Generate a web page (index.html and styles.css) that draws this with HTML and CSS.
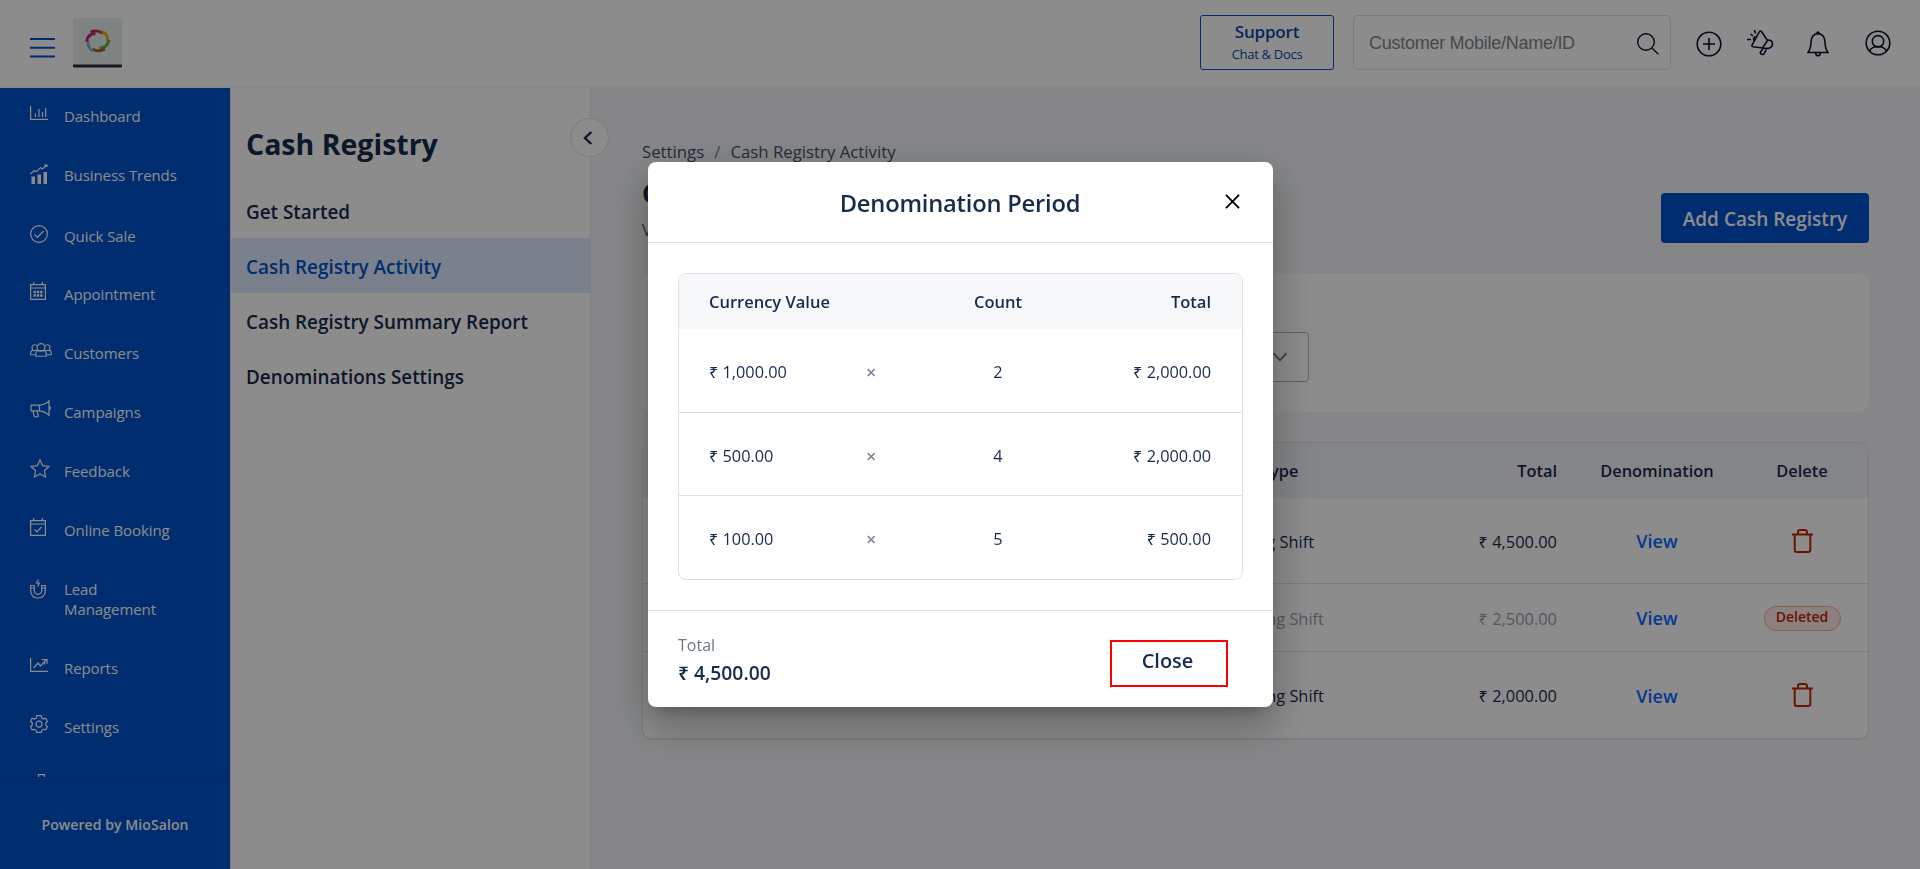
FILE: index.html
```html
<!DOCTYPE html>
<html lang="en">
<head>
<meta charset="utf-8">
<title>Cash Registry Activity</title>
<link rel="stylesheet" href="styles.css">
</head>
<body>
<div class="app">
  <header class="topbar">
    <svg class="burger" viewBox="0 0 25 20"><path d="M0 1h25M0 9.800h25M0 18.500h25"/></svg>
    <svg class="logo" viewBox="0 0 49 50"><rect class="logo-bg" width="49" height="48" rx="2"/><path class="logo-base" d="M0 46.500h49v2q0 1-2 1H2q-2 0-2-1z"/>
      <g fill="none" stroke-width="2.800"><path stroke="#d9232e" d="M17.500 14q6.500-3 12.500 1.500"/><path stroke="#f0a828" d="M29 13.500q6.500 2.500 5.500 10"/><path stroke="#59ad45" d="M36 22q-1 7-9.500 8.500"/><path stroke="#a9671c" d="M32 31q-6.500 3.500-12.500 0"/><path stroke="#6fb6cc" d="M20 33q-6-3-5-11"/><path stroke="#c4246f" d="M13.500 23.500q1-7.500 9-8"/></g></svg>
    <div class="support"><b>Support</b><span>Chat &amp; Docs</span></div>
    <div class="search"><span>Customer Mobile/Name/ID</span><svg viewBox="0 0 22 22"><circle cx="9" cy="9" r="8.300"/><path d="M15 15l6.300 6.300"/></svg></div>
    <svg class="ti t-plus" viewBox="0 0 26 26"><circle cx="13" cy="13" r="11.800"/><path d="M13 7v12M7 13h12"/></svg>
    <svg class="ti t-horn" viewBox="0 0 28 28"><path d="M13 4.500q1.300-2.800 2.800-.5l5.700 8.500-5 7.500-9.500-1.200q-1.800-.5-.8-2zM21.500 12q4.500-.3 5 3.500 0 4-4.500 5l-5.500-.5M17 20.500l-2.800 4q.8 2.600 3.500 1.800l3-5.800M9.500 8.500q-3 1.500-1.200 4.500M4.500 6l2.500 2M8.500 2l1 3.500M1 11.500h4"/></svg>
    <svg class="ti t-bell" viewBox="0 0 22 26"><path d="M11 2.500q-6.500.5-7 8.500-.2 7-3 10.500h20q-2.800-3.500-3-10.500-.5-8-7-8.500zM8.500 22q.5 2.800 2.500 2.800t2.500-2.800"/><circle cx="11" cy="2" r="1"/></svg>
    <svg class="ti t-user" viewBox="0 0 26 26"><circle cx="13" cy="13" r="11.800"/><circle cx="13" cy="11.300" r="5.700"/><path d="M4.500 21q2.500-4.500 8.500-4.500t8.500 4.500"/></svg>
  </header>
  <div class="body">
    <nav class="side">
      <ul class="menu">
        <li><svg viewBox="0 0 18 18"><path d="M.6 2v13.400H18M5.500 13V9.500M9 13V5M12.500 13V8M15.700 13V4"/></svg><span>Dashboard</span></li>
        <li><svg class="trend" viewBox="0 0 18 20"><path d="M.5 10l4-3.500 2 1.200 4-4 2 1L17 1M14 1h3v2"/><path class="solid" d="M1.500 12.500h3.500V20H1.500zM7.500 10.500H11V20H7.500zM13.500 8H17v12h-3.500z"/></svg><span>Business Trends</span></li>
        <li class="quick"><svg viewBox="0 0 18 18"><circle cx="9" cy="9" r="8.400"/><path d="M4.500 9.500l3 3 6-6.500"/></svg><span>Quick Sale</span></li>
        <li class="appt"><svg class="cal" viewBox="0 0 16 18"><path d="M.6 2.600h14.800v14.800H.6zM.6 6h14.800M3.700 0v3M12.300 0v3"/><path d="M3.500 10h9M3.500 13.500h9" stroke-width="2.400" stroke-dasharray="2.400 .9"/></svg><span>Appointment</span></li>
        <li><svg class="wide" viewBox="0 0 23 15"><circle cx="11.500" cy="4.800" r="4"/><path d="M6 14q-.5-5.500 3-5.800h5q3.500.3 3 5.800zM7.500 7.500Q5 8.500 2.500 7.800M6 12.500H.8Q.3 8.300 2.800 7.800.8 2.500 4.500 2q1.700-.2 2.800 1.300M15.500 7.500q2.500 1 5 .3M17 12.500h5.200q.5-4.200-2-4.700 2-5.300-1.700-5.800-1.700-.2-2.800 1.300"/></svg><span>Customers</span></li>
        <li><svg class="wide" viewBox="0 0 21 18"><path d="M.6 5.200H9Q15 4.500 18.500.8v14.500Q15 11.500 9 10.800H.6zM9 5.200v5.600M19.800 6.500v3M2.500 10.800l1 5q1.500 2 4.500.5l-1.500-5.500"/></svg><span>Campaigns</span></li>
        <li><svg class="star" viewBox="0 0 20 19"><path d="M10 1l2.700 5.700 6.200.8-4.500 4.300 1.100 6.200-5.500-3-5.500 3 1.100-6.200L1.100 7.500l6.200-.8z"/></svg><span>Feedback</span></li>
        <li><svg class="cal" viewBox="0 0 16 18"><path d="M.6 2.600h14.800v14.800H.6zM.6 6h14.800M3.700 0v3M12.300 0v3M4.500 11.500l2.500 2.500 4.500-5"/></svg><span>Online Booking</span></li>
        <li class="two"><svg class="magnet" viewBox="0 0 16 20"><path d="M.7 6.500h3.600V12q.5 3.300 3.700 3.300t3.700-3.300V6.500h3.600V12q-.6 7-7.300 7T.7 12zM.7 9h3.600M11.700 9h3.600M8.500.5L6.500 4h3L7.500 7.500"/></svg><span>Lead Management</span></li>
        <li><svg viewBox="0 0 18 18"><path d="M.6 2v13.400H18M3.500 12l4.500-5 2.500 3 5.500-6M11.500 3.500H17V8M14.500 4.500v4"/></svg><span>Reports</span></li>
        <li><svg viewBox="0 0 18 18"><path d="M6.800.7h4.400l.6 2.300 1.800 1 2.200-.7 1.600 3.200-1.700 1.600v2l1.700 1.600-1.600 3.200-2.200-.6-1.800 1-.6 2H6.800l-.6-2-1.800-1-2.200.6L.6 11.700l1.700-1.600v-2L.6 6.500l1.600-3.200 2.200.7 1.800-1z"/><circle cx="9" cy="9.200" r="3"/></svg><span>Settings</span></li>
        <li class="clipped"><svg class="last" viewBox="0 0 23 18"><path d="M8.500 5V.7h6V5M.7 5h21.600v12H.7z"/></svg></li>
      </ul>
      <div class="powered"><span>Powered by MioSalon</span></div>
    </nav>
    <aside class="panel">
      <h2><span>Cash Registry</span></h2>
      <a><span>Get Started</span></a>
      <a class="on"><span>Cash Registry Activity</span></a>
      <a><span>Cash Registry Summary Report</span></a>
      <a><span>Denominations Settings</span></a>
      <div class="collapse"><svg viewBox="0 0 10 14"><path d="M8.300 1L2 7l6.300 6"/></svg></div>
    </aside>
    <main class="main">
      <div class="crumbs"><span>Settings</span><i>/</i><span>Cash Registry Activity</span></div>
      <div class="head">
        <div><h1>Cash Registry Activity</h1><p>View cash registry activity</p></div>
        <button class="add"><span>Add Cash Registry</span></button>
      </div>
      <div class="filter"><div class="select"><svg viewBox="0 0 16 10"><path d="M1.500 1.200L8 8.200l6.500-7"/></svg></div></div>
      <div class="grid">
        <div class="tr th"><span>Shift Type</span><span class="r">Total</span><span class="c">Denomination</span><span class="c">Delete</span></div>
        <div class="tr"><span>Closing Shift</span><span class="r">₹ 4,500.00</span><span class="c view">View</span><span class="c"><svg class="bin" viewBox="0 0 21 24"><path d="M0 5.500h21M2.700 5.500V21q0 2 2 2h11.600q2 0 2-2V5.500M6 5V3.200Q6 1 8 1h5q2 0 2 2.200V5"/></svg></span></div>
        <div class="tr gone"><span>Opening Shift</span><span class="r">₹ 2,500.00</span><span class="c view">View</span><span class="c"><em>Deleted</em></span></div>
        <div class="tr"><span>Opening Shift</span><span class="r">₹ 2,000.00</span><span class="c view">View</span><span class="c"><svg class="bin" viewBox="0 0 21 24"><path d="M0 5.500h21M2.700 5.500V21q0 2 2 2h11.600q2 0 2-2V5.500M6 5V3.200Q6 1 8 1h5q2 0 2 2.200V5"/></svg></span></div>
      </div>
    </main>
  </div>
</div>
<div class="overlay">
  <section class="modal">
    <div class="m-head"><h3><span>Denomination Period</span></h3><svg viewBox="0 0 16 16"><path d="M1 1l14 14M15 1L1 15"/></svg></div>
    <div class="m-body">
      <div class="m-table">
        <div class="mr mh"><span>Currency Value</span><span></span><span class="c">Count</span><span class="r">Total</span></div>
        <div class="mr"><span>₹ 1,000.00</span><span class="x">×</span><span class="c">2</span><span class="r">₹ 2,000.00</span></div>
        <div class="mr"><span>₹ 500.00</span><span class="x">×</span><span class="c">4</span><span class="r">₹ 2,000.00</span></div>
        <div class="mr"><span>₹ 100.00</span><span class="x">×</span><span class="c">5</span><span class="r">₹ 500.00</span></div>
      </div>
    </div>
    <div class="m-foot"><div class="sum"><span>Total</span><b>₹ 4,500.00</b></div><button class="close"><span>Close</span></button></div>
  </section>
</div>
</body>
</html>
```

FILE: styles.css
```css
* { box-sizing: border-box; }
body { margin: 0; font-family: "Open Sans", "Noto Sans", sans-serif; color: #172b4d; overflow: hidden; }
h1, h2, h3, p, ul { margin: 0; padding: 0; }
svg { display: block; fill: none; stroke: currentColor; flex: none; }
button { font-family: inherit; border: 0; }
.app { width: 1920px; height: 869px; display: flex; flex-direction: column; background: #f4f5f7; }

/* top bar */
.topbar { height: 88px; background: #fff; border-bottom: 2px solid #f4f4f5; display: flex; align-items: flex-start; padding-left: 30px; flex: none; color: #0b1430; }
.burger { width: 25px; height: 20px; margin-top: 38px; stroke: #0052cc; stroke-width: 2; }
.logo { width: 49px; height: 50px; margin: 18px 0 0 18px; stroke: none; }
.logo-bg { fill: #e9eef0; }
.logo-base { fill: #2b2c3d; }
.support { width: 134px; height: 55px; margin: 15px 0 0 1078px; border: 1px solid #0052cc; border-radius: 3px; display: flex; flex-direction: column; align-items: center; color: #0747a6; padding-top: 4px; }
.support b { font-size: 17px; line-height: 24px; font-weight: 600; letter-spacing: -.2px; }
.support span { font-size: 13px; line-height: 20px; letter-spacing: -.3px; font-weight: 500; }
.search { width: 318px; height: 55px; margin: 15px 0 0 19px; border: 1px solid #dfe1e6; border-radius: 4px; display: flex; justify-content: space-between; align-items: center; padding: 0 11px 0 15px; font: 18px "Liberation Sans", sans-serif; color: #7c858c; }
.search span { letter-spacing: -.27px; padding-top: 1px; }
.search svg { width: 22px; height: 22px; margin-top: 3px; stroke: #0b1430; stroke-width: 1.400; }
.ti { stroke-width: 1.600; }
.t-plus { width: 26px; height: 26px; margin: 31px 0 0 25px; }
.t-horn { width: 28px; height: 28px; margin: 28px 0 0 24px; }
.t-bell { width: 22px; height: 26px; margin: 31px 0 0 33px; }
.t-user { width: 26px; height: 26px; margin: 30px 0 0 36px; }

.body { flex: 1; min-height: 0; display: flex; }

/* primary navigation */
.side { width: 230px; background: #0052cc; color: #fff; display: flex; flex-direction: column; flex: none; }
.menu { list-style: none; height: 689px; overflow: hidden; flex: none; }
.menu li { height: 59px; display: flex; align-items: center; padding-left: 30px; font-size: 15px; letter-spacing: -.08px; line-height: 20px; }
.menu li:first-child { margin-top: -2px; }
.menu li:nth-child(n+5) { padding-top: 2px; }
.menu svg { width: 18px; height: 18px; stroke-width: 1.200; margin: 0 16px 5px 0; overflow: visible; }
.menu .solid { fill: #fff; stroke: none; }
.menu .trend { height: 20px; margin-bottom: 2px; }
.menu .cal { width: 16px; margin-right: 18px; }
.menu .magnet { width: 16px; height: 20px; margin: 0 18px 20px 0; }
.menu .wide { width: 22px; margin-right: 12px; }
.menu .star { width: 20px; height: 19px; margin-right: 14px; }
.menu span { width: 120px; }
.menu .quick { padding-top: 5px; }
.menu .appt { padding-top: 2px; }
.menu .two { height: 79px; }
.menu li.clipped:last-child { align-items: flex-start; padding-top: 19px; }
.menu .last { width: 23px; margin: 0; }
.powered { flex: 1; display: flex; justify-content: center; border-top: 1px solid #004ec3; padding: 37px 0 0; font-size: 14px; line-height: 20px; font-weight: 600; letter-spacing: .08px; }

/* section panel */
.panel { width: 361px; background: #fff; border: solid #e4e5e8; border-width: 0 1px; position: relative; flex: none; padding-top: 34px; }
.panel h2 { font-size: 28.500px; line-height: 44px; padding-left: 15px; font-weight: 700; }
.panel h2 + a { margin-top: 17px; }
.panel a { display: flex; align-items: center; height: 55px; padding: 3px 0 0 15px; font-size: 18.900px; font-weight: 600; }
.panel .on { background: #deebff; color: #0052cc; }
.collapse { position: absolute; right: -19px; top: 30px; width: 39px; height: 39px; border: 1px solid #dfe1e6; border-radius: 50%; background: #fff; display: grid; place-items: center; }
.collapse svg { width: 10px; height: 14px; stroke-width: 2.400; margin-right: 3px; }

/* content */
.main { flex: 1; padding: 52px 51px 0 51px; }
.crumbs { display: flex; font-size: 16.800px; line-height: 24px; color: #42526e; }
.crumbs i { font-style: normal; margin: 0 10px; color: #6b778c; }
.head { display: flex; justify-content: space-between; height: 109px; padding-top: 12px; }
.head h1 { font-size: 26px; line-height: 34px; }
.head p { font-size: 16px; line-height: 40px; color: #42526e; }
.add { width: 208px; height: 50px; margin-top: 17px; background: #0052cc; color: #fff; border-radius: 4px; font-size: 19px; font-weight: 600; padding: 2px 0 0; }
.filter { height: 139px; background: #fff; border-radius: 10px; padding: 59px 0 0 430px; }
.select { width: 237px; height: 50px; border: 1px solid #a9aeb8; border-radius: 4px; display: flex; justify-content: flex-end; align-items: center; padding-right: 20px; color: #7a8494; }
.select svg { width: 16px; height: 10px; stroke-width: 2; }
.grid { margin-top: 30px; border: 1px solid #dfe1e6; border-bottom-width: 2px; border-radius: 10px; background: #fff; overflow: hidden; }
.tr { height: 86px; border-top: 1px solid #dfe1e6; display: grid; grid-template-columns: 249px 88px 200px 90px; padding-left: 577px; align-items: center; font-size: 16.400px; }
.tr:not(.th) > span:not(:last-child) { padding-top: 1px; }
.th { height: 55px; background: #f0f2f5; border-top: 0; font-weight: 600; font-size: 16.400px; }
.th + .tr { border-top: 0; height: 85px; }
.tr:last-child { height: 87px; }
.gone { height: 68px; color: #97a0af; }
.r { text-align: right; }
.c { text-align: center; }
.view { color: #0c66ff; font-weight: 600; font-size: 18px; }
.bin { width: 21px; height: 24px; margin: 0 auto; stroke: #bf2600; stroke-width: 2; overflow: visible; }
em { display: inline-block; width: 77px; height: 25px; border: 1px solid #ffa58e; border-radius: 13px; background: #ffebe6; color: #bf2600; font: 600 14px/20px "Open Sans", sans-serif; }

/* dialog */
.overlay { position: fixed; inset: 0; background: rgba(0, 0, 0, .45); display: flex; justify-content: center; align-items: flex-start; padding-top: 162px; }
.modal { width: 625px; height: 545px; background: #fff; border-radius: 8px; margin-left: 1px; display: flex; flex-direction: column; box-shadow: 0 11px 15px -7px rgba(0, 0, 0, .2), 0 24px 38px 3px rgba(0, 0, 0, .14), 0 9px 46px 8px rgba(0, 0, 0, .12); }
.m-head { height: 81px; border-bottom: 1px solid #dfe1e6; display: flex; align-items: center; padding-right: 33px; }
.m-head h3 { flex: 1; text-align: center; font-size: 23.700px; font-weight: 600; letter-spacing: -.2px; padding: 2px 0 0 47px; }
.m-head svg { width: 15px; height: 15px; stroke: #000; stroke-width: 2; margin-bottom: 2px; }
.m-body { flex: 1; padding: 30px 30px 0; }
.m-table { border: 1px solid #dfe1e6; border-radius: 8px; overflow: hidden; width: 565px; height: 307px; }
.mr { height: 83px; border-top: 1px solid #dfe1e6; display: grid; grid-template-columns: 157px 80px 104px 161px; padding: 3px 0 0 30px; align-items: center; font-size: 16.300px; }
.mh { height: 55px; background: #f7f8fa; font-weight: 600; border-top: 0; font-size: 16.500px; padding-top: 0; }
.mh + .mr { border-top: 0; padding-top: 2px; }
.x { color: #7a869a; font-weight: 600; font-size: 18px; line-height: 22px; padding-top: 1px; }
.m-foot { height: 97px; border-top: 1px solid #dfe1e6; display: flex; justify-content: space-between; padding: 21px 45px 0 30px; }
.sum { display: flex; flex-direction: column; font-size: 16px; line-height: 26px; color: #6b778c; }
.sum b { font-weight: 600; font-size: 19.300px; line-height: 30px; color: #172b4d; }
.close { width: 118px; height: 47px; margin-top: 8px; border: 2px solid #f00; background: #fff; color: #172b4d; font-size: 20px; font-weight: 600; padding: 0 3px 5px 0; line-height: 1; }
```
